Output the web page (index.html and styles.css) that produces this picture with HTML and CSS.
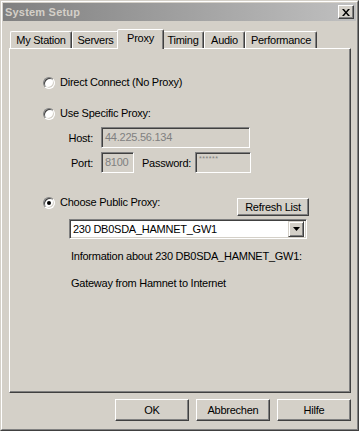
FILE: index.html
```html
<!DOCTYPE html>
<html lang="de">
<head>
  <meta charset="UTF-8" />
  <title>System Setup</title>
  <link rel="stylesheet" href="styles.css">
</head>
<body>

  <div class="window">
    <div class="frame">

      <!-- Title bar -->
      <div class="titlebar">
        <span class="title">System Setup</span>
        <button class="close-btn" aria-label="Close">
          <svg width="8" height="7" viewBox="0 0 8 7">
            <path d="M0 0h2l2 2.5 2-2.5h2l-3 3.5 3 3.5h-2l-2-2.5-2 2.5h-2l3-3.5z" fill="#000"/>
          </svg>
        </button>
      </div>

      <!-- Tabs -->
      <div class="tabs">
        <div class="tab tab-station">My Station</div>
        <div class="tab tab-servers">Servers</div>
        <div class="tab tab-proxy active">Proxy</div>
        <div class="tab tab-timing">Timing</div>
        <div class="tab tab-audio">Audio</div>
        <div class="tab tab-perf">Performance</div>
      </div>

      <!-- Proxy page -->
      <div class="panel">
        <label class="option opt-direct">
          <span class="radio"></span>
          <span>Direct Connect (No Proxy)</span>
        </label>

        <label class="option opt-specific">
          <span class="radio"></span>
          <span>Use Specific Proxy:</span>
        </label>

        <div class="fields">
          <div class="field-row">
            <span class="field-label">Host:</span>
            <div class="textbox host">44.225.56.134</div>
          </div>
          <div class="field-row row-port">
            <span class="field-label">Port:</span>
            <div class="textbox port">8100</div>
            <span class="pass-label">Password:</span>
            <div class="textbox password">******</div>
          </div>
        </div>

        <div class="public-row">
          <label class="option">
            <span class="radio checked"></span>
            <span>Choose Public Proxy:</span>
          </label>
          <button class="btn refresh">Refresh List</button>
        </div>

        <div class="combo">
          <span class="combo-value">230 DB0SDA_HAMNET_GW1</span>
          <span class="combo-arrow">
            <svg width="7" height="4" viewBox="0 0 7 4"><path d="M0 0h7l-3.5 4z" fill="#000"/></svg>
          </span>
        </div>

        <p class="info info-title">Information about 230 DB0SDA_HAMNET_GW1:</p>
        <p class="info info-text">Gateway from Hamnet to Internet</p>
      </div>

      <!-- Dialog buttons -->
      <div class="actions">
        <button class="btn action">OK</button>
        <button class="btn action">Abbrechen</button>
        <button class="btn action">Hilfe</button>
      </div>

    </div>
  </div>

</body>
</html>
```

FILE: styles.css
```css
html, body {
  margin: 0;
  padding: 0;
  background: #d4d0c8;
}

body {
  font-family: 'Liberation Sans', Arial, sans-serif;
  font-size: 11px;
  letter-spacing: -0.25px;
  color: #000;
}

.window {
  width: 359px;
  height: 431px;
  box-sizing: border-box;
  border: 1px solid;
  border-color: #d4d0c8 #404040 #404040 #d4d0c8;
  background: #d4d0c8;
}

.frame {
  height: 100%;
  box-sizing: border-box;
  border: 1px solid;
  border-color: #fff #808080 #808080 #fff;
  padding: 1px;
}

/* title bar */

.titlebar {
  height: 18px;
  display: flex;
  align-items: center;
  justify-content: space-between;
  padding: 0 2px 0 2px;
  background: linear-gradient(to right, #808080, #c0c0c0);
}

.title {
  color: #d4d0c8;
  font-weight: bold;
  font-size: 11px;
  letter-spacing: 0.2px;
}

.close-btn {
  width: 16px;
  height: 14px;
  padding: 0;
  display: flex;
  align-items: center;
  justify-content: center;
  background: #d4d0c8;
  border: 1px solid;
  border-color: #fff #404040 #404040 #fff;
  box-shadow: inset -1px -1px #808080;
}

/* tabs */

.tabs {
  display: flex;
  align-items: flex-end;
  height: 19px;
  margin: 8px 0 0 7px;
}

.tab {
  box-sizing: border-box;
  height: 17px;
  display: flex;
  align-items: center;
  justify-content: center;
  border: 1px solid;
  border-bottom: none;
  border-color: #fff #404040 transparent #fff;
  border-radius: 2px 2px 0 0;
  box-shadow: inset -1px 0 #808080;
  padding-bottom: 1px;
}

.tab-station { width: 62px; }
.tab-servers { width: 47px; }
.tab-proxy   { width: 43px; }
.tab-timing  { width: 42px; }
.tab-audio   { width: 41px; }
.tab-perf    { width: 72px; }

.tab.active {
  position: relative;
  z-index: 2;
  width: 47px;
  height: 20px;
  margin: 0 -2px -1px -2px;
  background: #d4d0c8;
  padding-bottom: 3px;
}

/* page */

.panel {
  box-sizing: border-box;
  width: 342px;
  height: 345px;
  margin-left: 6px;
  padding: 27px 41px 0 33px;
  border: 1px solid;
  border-color: #fff #404040 #404040 #fff;
  box-shadow: inset -1px -1px #808080;
}

.option {
  display: flex;
  align-items: center;
  gap: 5px;
  height: 13px;
  line-height: 13px;
}

.opt-specific {
  margin-top: 18px;
}

.radio {
  box-sizing: border-box;
  width: 12px;
  height: 12px;
  flex: none;
  border-radius: 50%;
  border: 1px solid;
  border-color: #808080 #fff #fff #808080;
  box-shadow: inset 1px 1px #404040, inset -1px -1px #d4d0c8;
  background: #fff;
  display: flex;
  align-items: center;
  justify-content: center;
}

.radio.checked::after {
  content: "";
  width: 4px;
  height: 4px;
  border-radius: 50%;
  background: #000;
}

.fields {
  margin: 7px 0 0 16px;
}

.field-row {
  display: flex;
  align-items: center;
  gap: 8px;
}

.row-port {
  margin-top: 4px;
}

.field-label {
  width: 34px;
  text-align: right;
}

.pass-label {
  margin-right: -4px;
}

.textbox {
  box-sizing: border-box;
  height: 21px;
  line-height: 17px;
  padding: 1px 3px;
  color: #808080;
  background: #d4d0c8;
  border: 1px solid;
  border-color: #808080 #fff #fff #808080;
  box-shadow: inset 1px 1px #404040, inset -1px -1px #d4d0c8;
}

.host { width: 149px; }
.port { width: 33px; }

.password {
  width: 56px;
  font-size: 7px;
  line-height: 10px;
  letter-spacing: 0.5px;
}

.public-row {
  display: flex;
  justify-content: space-between;
  align-items: flex-start;
  margin-top: 23px;
}

.btn {
  box-sizing: border-box;
  padding: 0;
  font-family: inherit;
  font-size: 11px;
  letter-spacing: -0.25px;
  color: #000;
  background: #d4d0c8;
  border: 1px solid;
  border-color: #fff #404040 #404040 #fff;
  box-shadow: inset -1px -1px #808080;
}

.refresh {
  width: 72px;
  height: 18px;
  margin-top: 2px;
}

.combo {
  box-sizing: border-box;
  display: flex;
  align-items: center;
  justify-content: space-between;
  width: 238px;
  height: 20px;
  margin: 3px 0 0 26px;
  padding: 2px;
  background: #fff;
  border: 1px solid;
  border-color: #808080 #fff #fff #808080;
  box-shadow: inset 1px 1px #404040, inset -1px -1px #d4d0c8;
}

.combo-value {
  padding-left: 1px;
}

.combo-arrow {
  box-sizing: border-box;
  width: 16px;
  height: 16px;
  display: flex;
  align-items: center;
  justify-content: center;
  background: #d4d0c8;
  border: 1px solid;
  border-color: #d4d0c8 #404040 #404040 #d4d0c8;
  box-shadow: inset 1px 1px #fff, inset -1px -1px #808080;
}

.info {
  margin: 0 0 0 28px;
  line-height: 13px;
  white-space: nowrap;
}

.info-title { margin-top: 11px; }
.info-text  { margin-top: 14px; }

/* dialog buttons */

.actions {
  display: flex;
  justify-content: flex-end;
  gap: 7px;
  margin-top: 6px;
  padding-right: 5px;
}

.action {
  width: 74px;
  height: 22px;
}
```
